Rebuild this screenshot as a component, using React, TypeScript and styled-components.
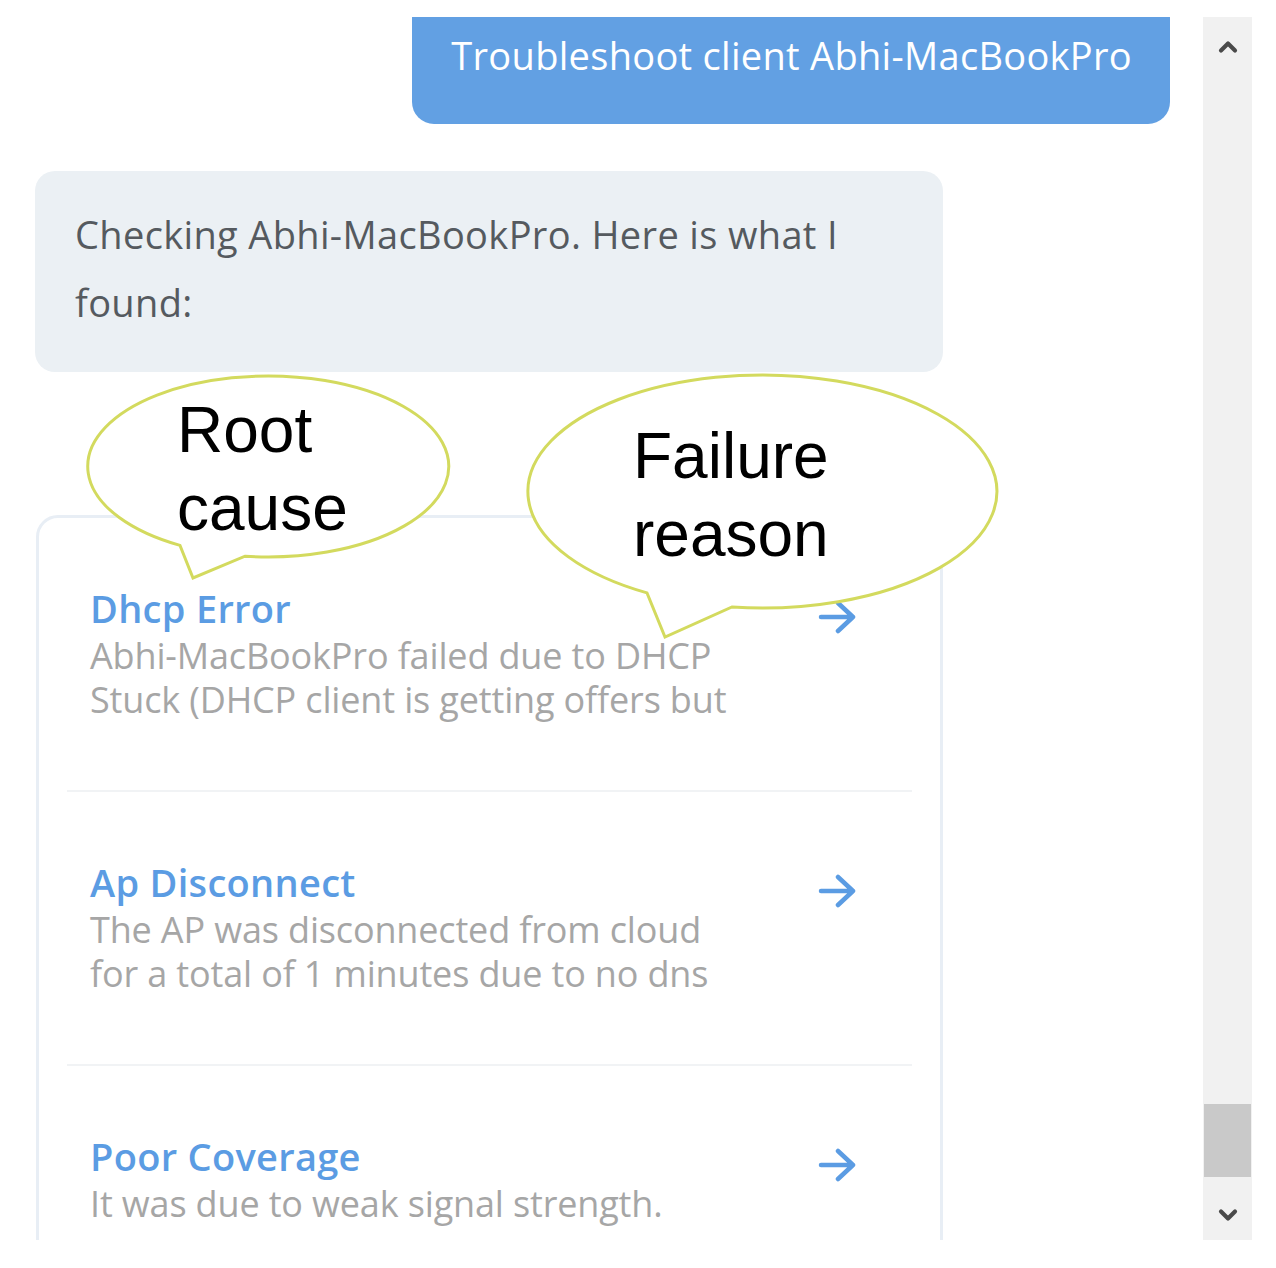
import React from "react";
import styled, { createGlobalStyle } from "styled-components";

const GlobalStyle = createGlobalStyle`
  html, body { margin: 0; padding: 0; background: #ffffff; }
  body { font-family: "Open Sans", "Liberation Sans", Arial, sans-serif; }
`;

const Page = styled.div`
  position: relative;
  width: 1276px;
  height: 1268px;
  box-sizing: border-box;
  padding: 17px 24px 28px 0;
  display: flex;
  overflow: hidden;
  background: #ffffff;
`;

const Viewport = styled.div`
  width: 1203px;
  height: 1223px;
  overflow: hidden;
  flex: none;
`;

const Content = styled.div`
  display: flex;
  flex-direction: column;
  margin-top: -20px;
`;

const UserBubble = styled.div`
  align-self: flex-end;
  margin-right: 33px;
  background: #62a0e3;
  color: #ffffff;
  font-size: 38px;
  letter-spacing: 0.3px;
  line-height: 52px;
  padding: 32px 38px 43px 39px;
  border-radius: 22px;
  white-space: nowrap;
`;

const BotBubble = styled.div`
  margin: 47px 0 0 35px;
  width: 908px;
  box-sizing: border-box;
  background: #ebf0f4;
  border-radius: 20px;
  padding: 29px 40px 36px 40px;
  color: #555a5f;
  font-size: 38px;
  letter-spacing: 0.35px;
  line-height: 68px;
`;

const Card = styled.div`
  margin: 143px 0 0 36px;
  width: 907px;
  box-sizing: border-box;
  border: 3px solid #e8eef5;
  border-radius: 22px;
  background: #ffffff;
  padding: 0 28px;
`;

const Row = styled.div<{ $last?: boolean }>`
  display: flex;
  justify-content: space-between;
  align-items: flex-start;
  padding: 64px 56px 68px 23px;
  border-bottom: ${(p) => (p.$last ? "none" : "2px solid #f1f3f5")};
`;

const RowBody = styled.div`
  width: 650px;
`;

const RowTitle = styled.div`
  color: #5b9ce3;
  font-size: 38px;
  font-weight: 600;
  letter-spacing: 0.3px;
  line-height: 52px;
`;

const RowDesc = styled.div`
  color: #a6a6a6;
  font-size: 36px;
  letter-spacing: -0.15px;
  line-height: 44px;
`;

const ArrowSvg = styled.svg`
  flex: none;
  margin-top: 18px;
  width: 38px;
  height: 34px;
`;

const Scrollbar = styled.div`
  flex: none;
  width: 49px;
  height: 1223px;
  background: #f1f1f1;
  display: flex;
  flex-direction: column;
`;

const ScrollButton = styled.div<{ $h: number }>`
  height: ${(p) => p.$h}px;
  display: flex;
  align-items: center;
  justify-content: center;
  flex: none;
`;

const Track = styled.div`
  flex: 1;
  display: flex;
  flex-direction: column;
  justify-content: flex-end;
  padding: 0 1px 13px;
`;

const Thumb = styled.div`
  height: 73px;
  background: #c9c9c9;
`;

const Callout = styled.div<{ $x: number; $y: number; $w: number; $h: number }>`
  position: absolute;
  left: ${(p) => p.$x}px;
  top: ${(p) => p.$y}px;
  width: ${(p) => p.$w}px;
  height: ${(p) => p.$h}px;
`;

const CalloutShape = styled.svg`
  position: absolute;
  inset: 0;
  overflow: visible;
`;

const CalloutText = styled.div<{ $tx: number; $ty: number }>`
  position: absolute;
  left: ${(p) => p.$tx}px;
  top: ${(p) => p.$ty}px;
  font-family: "Liberation Sans", Arial, sans-serif;
  font-size: 64px;
  line-height: 78px;
  color: #000000;
  white-space: nowrap;
`;

const Arrow = () => (
  <ArrowSvg viewBox="0 0 38 34" fill="none">
    <path
      d="M3 17H35M20 3L35 17L20 31"
      stroke="#5b9ce3"
      strokeWidth="4.5"
      strokeLinecap="round"
      strokeLinejoin="round"
    />
  </ArrowSvg>
);

const Chevron = ({ down }: { down?: boolean }) => (
  <svg width="20" height="14" viewBox="0 0 20 14" fill="none">
    <path
      d={down ? "M3 3.5L10 10.5L17 3.5" : "M3 10.5L10 3.5L17 10.5"}
      stroke="#4a4a4a"
      strokeWidth="4.2"
      strokeLinecap="round"
      strokeLinejoin="round"
    />
  </svg>
);

type CalloutProps = {
  x: number;
  y: number;
  w: number;
  h: number;
  path: string;
  tx: number;
  ty: number;
  lines: string[];
};

const SpeechCallout = ({ x, y, w, h, path, tx, ty, lines }: CalloutProps) => (
  <Callout $x={x} $y={y} $w={w} $h={h}>
    <CalloutShape width={w} height={h} viewBox={`${x} ${y} ${w} ${h}`}>
      <path d={path} fill="#ffffff" stroke="#d3da5e" strokeWidth="3" strokeLinejoin="miter" />
    </CalloutShape>
    <CalloutText $tx={tx - x} $ty={ty - y}>
      {lines.map((l) => (
        <div key={l}>{l}</div>
      ))}
    </CalloutText>
  </Callout>
);

const items = [
  {
    title: "Dhcp Error",
    desc: "Abhi-MacBookPro failed due to DHCP Stuck (DHCP client is getting offers but",
  },
  {
    title: "Ap Disconnect",
    desc: "The AP was disconnected from cloud for a total of 1 minutes due to no dns",
  },
  {
    title: "Poor Coverage",
    desc: "It was due to weak signal strength.",
  },
];

export default function App() {
  return (
    <>
      <GlobalStyle />
      <Page>
        <Viewport>
          <Content>
            <UserBubble>Troubleshoot client Abhi-MacBookPro</UserBubble>
            <BotBubble>Checking Abhi-MacBookPro. Here is what I found:</BotBubble>
            <Card>
              {items.map((it, i) => (
                <Row key={it.title} $last={i === items.length - 1}>
                  <RowBody>
                    <RowTitle>{it.title}</RowTitle>
                    <RowDesc>{it.desc}</RowDesc>
                  </RowBody>
                  <Arrow />
                </Row>
              ))}
            </Card>
          </Content>
        </Viewport>
        <Scrollbar>
          <ScrollButton $h={60}>
            <Chevron />
          </ScrollButton>
          <Track>
            <Thumb />
          </Track>
          <ScrollButton $h={50}>
            <Chevron down />
          </ScrollButton>
        </Scrollbar>
        <SpeechCallout
          x={84}
          y={372}
          w={370}
          h={210}
          path="M245 556.2 A180.5 90.5 0 1 0 180 545.4 L193 578 Z"
          tx={177}
          ty={391}
          lines={["Root", "cause"]}
        />
        <SpeechCallout
          x={524}
          y={371}
          w={478}
          h={270}
          path="M732 607 A234.5 116.5 0 1 0 647 592.9 L665 637 Z"
          tx={633}
          ty={417}
          lines={["Failure", "reason"]}
        />
      </Page>
    </>
  );
}
